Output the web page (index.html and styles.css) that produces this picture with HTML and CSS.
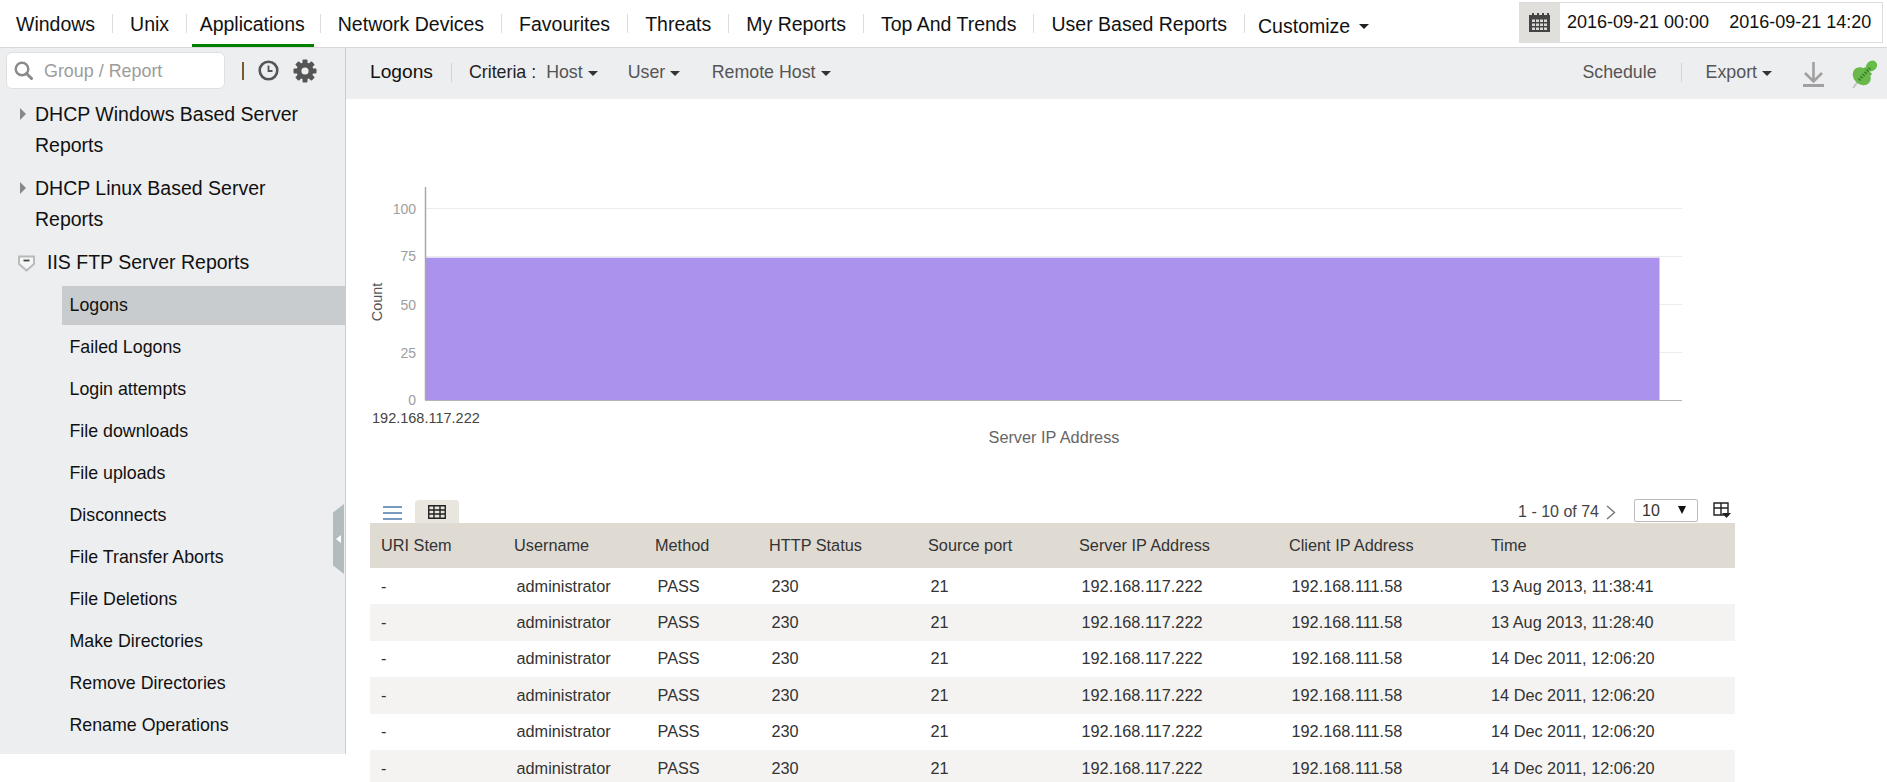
FILE: index.html
```html
<!DOCTYPE html>
<html lang="en">
<head>
<meta charset="utf-8">
<title>IIS FTP Server Reports - Logons</title>
<link rel="stylesheet" href="styles.css">
</head>
<body>
<header class="topbar">
  <nav class="nav">
    <a class="nav-item">Windows</a><i class="nav-sep"></i>
    <a class="nav-item">Unix</a><i class="nav-sep"></i>
    <a class="nav-item active">Applications</a><i class="nav-sep"></i>
    <a class="nav-item">Network Devices</a><i class="nav-sep"></i>
    <a class="nav-item">Favourites</a><i class="nav-sep"></i>
    <a class="nav-item">Threats</a><i class="nav-sep"></i>
    <a class="nav-item">My Reports</a><i class="nav-sep"></i>
    <a class="nav-item">Top And Trends</a><i class="nav-sep"></i>
    <a class="nav-item">User Based Reports</a><i class="nav-sep"></i>
    <a class="nav-item customize">Customize <b class="caret caret-nav"></b></a>
  </nav>
  <div class="daterange">
    <span class="date-icon">
      <svg width="21" height="19" viewBox="0 0 21 19"><path fill="#444" d="M0 2h3V0h2v2h3V0h2v2h3V0h2v2h3V0h2v2h1v17H0z"/><path fill="#d8d8d6" d="M3 6.500h3v2.500H3zM7 6.500h3v2.500H7zM11 6.500h3v2.500h-3zM15 6.500h3v2.500h-3zM3 10.500h3V13H3zM7 10.500h3V13H7zM11 10.500h3V13h-3zM15 10.500h3V13h-3zM3 14.500h3V17H3zM7 14.500h3V17H7zM11 14.500h3V17h-3zM15 14.500h3V17h-3z"/></svg>
    </span>
    <span class="date-text">2016-09-21 00:00</span>
    <span class="date-text">2016-09-21 14:20</span>
  </div>
</header>
<div class="layout">
  <aside class="sidebar">
    <div class="side-tools">
      <div class="search">
        <svg width="19" height="19" viewBox="0 0 19 19"><circle cx="8" cy="8" r="6.300" fill="none" stroke="#8a8a8a" stroke-width="2.400"/><path d="M12.500 12.500l5 5" stroke="#8a8a8a" stroke-width="3" stroke-linecap="round"/></svg>
        <span class="search-ph">Group / Report</span>
      </div>
      <i class="tool-sep"></i>
      <svg class="clock" width="21" height="21" viewBox="0 0 21 21"><circle cx="10.500" cy="10.500" r="8.800" fill="none" stroke="#555" stroke-width="2.600"/><path d="M10.500 5.500v5.500h4" fill="none" stroke="#555" stroke-width="1.800"/></svg>
      <svg class="gear" width="24" height="24" viewBox="0 0 24 24"><g fill="#555"><rect x="9.500" y="0.500" width="5" height="23" rx="1"/><rect x="9.500" y="0.500" width="5" height="23" rx="1" transform="rotate(45 12 12)"/><rect x="9.500" y="0.500" width="5" height="23" rx="1" transform="rotate(90 12 12)"/><rect x="9.500" y="0.500" width="5" height="23" rx="1" transform="rotate(135 12 12)"/><circle cx="12" cy="12" r="8.500"/></g><circle cx="12" cy="12" r="3.600" fill="#edeef0"/></svg>
    </div>
    <ul class="tree">
      <li class="group"><span class="arrow"></span>DHCP Windows Based Server Reports</li>
      <li class="group"><span class="arrow"></span>DHCP Linux Based Server Reports</li>
      <li class="group open">
        <svg class="shield" width="17" height="17" viewBox="0 0 17 17"><path d="M1 1.500h15v7.500l-7.500 6.500L1 9z" fill="#f6f6f6" stroke="#b5baba" stroke-width="1.900"/><path d="M5.500 5.500h6" stroke="#444" stroke-width="1.800"/></svg>IIS FTP Server Reports</li>
    </ul>
    <ul class="leaves">
      <li class="leaf selected">Logons</li>
      <li class="leaf">Failed Logons</li>
      <li class="leaf">Login attempts</li>
      <li class="leaf">File downloads</li>
      <li class="leaf">File uploads</li>
      <li class="leaf">Disconnects</li>
      <li class="leaf">File Transfer Aborts</li>
      <li class="leaf">File Deletions</li>
      <li class="leaf">Make Directories</li>
      <li class="leaf">Remove Directories</li>
      <li class="leaf">Rename Operations</li>
    </ul>
    <div class="collapse-handle"><span class="handle-arrow"></span></div>
  </aside>
  <main class="main">
    <div class="subbar">
      <span class="sub-title">Logons</span><i class="sub-sep"></i>
      <span class="crit-label">Criteria :</span>
      <span class="crit crit-host">Host<b class="caret"></b></span>
      <span class="crit crit-user">User<b class="caret"></b></span>
      <span class="crit crit-remote">Remote Host<b class="caret"></b></span>
      <span class="sub-right">
        <span class="action">Schedule</span><i class="sub-sep sep-right"></i>
        <span class="action">Export<b class="caret"></b></span>
        <svg class="download" width="21" height="25" viewBox="0 0 21 25"><path d="M10.500 0v19M2 11l8.500 8.500L19 11" fill="none" stroke="#a0a0a0" stroke-width="2.600"/><path d="M0 23.500h21" stroke="#a0a0a0" stroke-width="3"/></svg>
        <svg class="pin" width="26" height="30" viewBox="0 0 26 30"><path d="M1 29l6-8" stroke="#c4c4c4" stroke-width="2"/><ellipse cx="19.500" cy="7" rx="6" ry="5" fill="#68bd4a" transform="rotate(-40 19.500 7)"/><path d="M13 8l7 7-5 5-6-7z" fill="#58ad3c"/><ellipse cx="9.700" cy="17.300" rx="10" ry="8" fill="#68b84c" transform="rotate(45 9.700 17.300)"/><path d="M7 21l11-12" stroke="#3a7a2a" stroke-width="3" stroke-dasharray="1.500 1.500"/></svg>
      </span>
    </div>
    <section class="chart">
      <svg class="chart-svg" width="1541" height="392" viewBox="0 0 1541 392">
        <g class="grid">
          <path d="M79 109.500H1336M79 157.500H1336M79 205.500H1336M79 253.500H1336"/>
        </g>
        <rect class="bar" x="79" y="159" width="1234.500" height="142"/>
        <path class="bar-cap" d="M79 158.500H1313.500"/>
        <path class="axis-y" d="M79.500 88V301"/>
        <path class="axis-x" d="M79 301.500H1336"/>
        <g class="ticks">
          <text x="70" y="115">100</text>
          <text x="70" y="162">75</text>
          <text x="70" y="211">50</text>
          <text x="70" y="259">25</text>
          <text x="70" y="306">0</text>
        </g>
        <text class="axis-name" transform="translate(36 203) rotate(-90)" text-anchor="middle">Count</text>
        <text class="cat-label" x="26" y="324">192.168.117.222</text>
        <text class="x-title" x="708" y="344" text-anchor="middle">Server IP Address</text>
      </svg>
    </section>
    <div class="table-tools">
      <span class="view-list">
        <svg width="19" height="14" viewBox="0 0 19 14"><path d="M0 1h19M0 7h19M0 13h19" stroke="#4a7bab" stroke-width="1.500"/></svg>
      </span>
      <span class="view-grid">
        <svg width="18" height="14" viewBox="0 0 18 14"><path d="M.75.75h16.500v12.500H.75zM.75 5h16.500M.75 9h16.500M6 .75v12.500M12 .75v12.500" fill="none" stroke="#222" stroke-width="1.400"/></svg>
      </span>
      <span class="pager">1 - 10 of 74</span>
      <svg class="chev" width="10" height="15" viewBox="0 0 10 15"><path d="M1 1l7.500 6.500L1 14" fill="none" stroke="#777" stroke-width="1.400"/></svg>
      <span class="page-size">10<b class="size-arrow"></b></span>
      <svg class="columns" width="18" height="16" viewBox="0 0 18 16"><path d="M1 1h14v12H1zM1 6h14M8 1v12" fill="#fff" stroke="#222" stroke-width="1.400"/><path d="M9 11h9l-4.500 5z" fill="#222"/></svg>
    </div>
    <table class="data">
      <colgroup>
        <col class="c1"><col class="c2"><col class="c3"><col class="c4"><col class="c5"><col class="c6"><col class="c7"><col class="c8">
      </colgroup>
      <thead>
        <tr><th>URI Stem</th><th>Username</th><th>Method</th><th>HTTP Status</th><th>Source port</th><th>Server IP Address</th><th>Client IP Address</th><th>Time</th></tr>
      </thead>
      <tbody>
        <tr><td class="first">-</td><td>administrator</td><td>PASS</td><td>230</td><td>21</td><td>192.168.117.222</td><td>192.168.111.58</td><td class="last">13 Aug 2013, 11:38:41</td></tr>
        <tr><td class="first">-</td><td>administrator</td><td>PASS</td><td>230</td><td>21</td><td>192.168.117.222</td><td>192.168.111.58</td><td class="last">13 Aug 2013, 11:28:40</td></tr>
        <tr><td class="first">-</td><td>administrator</td><td>PASS</td><td>230</td><td>21</td><td>192.168.117.222</td><td>192.168.111.58</td><td class="last">14 Dec 2011, 12:06:20</td></tr>
        <tr><td class="first">-</td><td>administrator</td><td>PASS</td><td>230</td><td>21</td><td>192.168.117.222</td><td>192.168.111.58</td><td class="last">14 Dec 2011, 12:06:20</td></tr>
        <tr><td class="first">-</td><td>administrator</td><td>PASS</td><td>230</td><td>21</td><td>192.168.117.222</td><td>192.168.111.58</td><td class="last">14 Dec 2011, 12:06:20</td></tr>
        <tr><td class="first">-</td><td>administrator</td><td>PASS</td><td>230</td><td>21</td><td>192.168.117.222</td><td>192.168.111.58</td><td class="last">14 Dec 2011, 12:06:20</td></tr>
      </tbody>
    </table>
  </main>
</div>
</body>
</html>
```

FILE: styles.css
```css
* { box-sizing: border-box; }
html, body { margin: 0; padding: 0; height: 782px; overflow: hidden; background: #fff; }
body { font-family: "Liberation Sans", Arial, sans-serif; color: #111; }
ul { list-style: none; margin: 0; padding: 0; }
i, b { display: inline-block; font-style: normal; }

.topbar { display: flex; justify-content: space-between; height: 48px; border-bottom: 1px solid #d8d8d8; }
.nav { display: flex; align-items: center; height: 47px; padding-left: 7px; gap: 8px; }
.nav-item { display: flex; align-items: center; height: 47px; padding: 2px 9px 0; font-size: 19.5px; color: #111; white-space: pre; }
.nav-item.active { margin: 0 -2px 0 -3px; padding: 5px 9px 0 7.5px; border-bottom: 3px solid #008000; }
.nav-item.customize { margin-left: -4px; padding-top: 5px; }
.nav-sep { width: 1px; height: 19px; background: #dcdcdc; }
.caret { width: 0; height: 0; margin-left: 5px; border-style: solid; border-width: 5.5px 5.5px 0; border-color: #333 transparent transparent; vertical-align: 2px; }
.caret-nav { margin-left: 3px; border-color: #222 transparent transparent; }

.daterange { display: flex; align-items: center; flex: none; width: 364px; height: 41px; margin: 2px 4px 0 0; border: 1px solid #ddd; border-left: 0; font-size: 18px; color: #111; }
.date-icon { display: flex; align-items: center; justify-content: center; flex: none; width: 41px; height: 39px; margin-right: 7px; background: #e0dfdc; }
.date-text { flex: none; margin-right: 20px; white-space: nowrap; }
.date-text:last-child { margin-right: 0; }

.layout { display: flex; height: 734px; }
.sidebar { position: relative; flex: none; width: 346px; height: 706px; background: #edeef0; border-right: 1px solid #ccc; }
.side-tools { display: flex; align-items: center; height: 51px; padding: 0 0 6px 6px; }
.search { display: flex; align-items: center; width: 219px; height: 37px; padding-left: 7px; background: #fff; border: 1px solid #dfe0e2; border-radius: 6px; }
.search-ph { margin-left: 11px; padding-top: 1px; font-size: 17.9px; color: #9c9c9c; }
.tool-sep { width: 2px; height: 18px; margin-left: 17px; background: #7a5a30; }
.clock { margin-left: 14px; }
.gear { margin-left: 14px; }

.group { position: relative; padding: 0 30px 12px 35px; font-size: 19.5px; line-height: 31px; color: #111; }
.arrow { position: absolute; left: 20px; top: 9px; width: 0; height: 0; border-style: solid; border-width: 6px 0 6px 6px; border-color: transparent transparent transparent #888; }
.group.open { padding: 0 0 7.5px 47px; }
.shield { position: absolute; left: 18px; top: 8px; }
.leaves { padding-left: 62px; }
.leaf { height: 39px; margin-bottom: 3px; padding-left: 7.5px; font-size: 17.8px; line-height: 39px; color: #111; }
.leaf.selected { background: #c9ccce; }
.collapse-handle { position: absolute; right: 1px; top: 456px; display: flex; align-items: center; justify-content: center; width: 11px; height: 70px; background: #b2bcbe; clip-path: polygon(100% 0, 100% 100%, 0 88%, 0 12%); }
.handle-arrow { width: 0; height: 0; border-style: solid; border-width: 4px 5px 4px 0; border-color: transparent #fff transparent transparent; }

.main { flex: 1; min-width: 0; height: 734px; overflow: hidden; }
.subbar { display: flex; align-items: center; height: 51px; padding: 0 0 3px 24px; background: #edeef0; font-size: 17.8px; }
.sub-title { font-size: 19.2px; color: #111; }
.sub-sep { width: 1px; height: 19px; margin: 0 17px 0 18px; background: #d4d4d4; }
.crit-label { color: #222; }
.crit { color: #555; white-space: nowrap; }
.crit-host { margin-left: 10px; }
.crit-user { margin-left: 30px; }
.crit-remote { margin-left: 31.5px; }
.sub-right { display: flex; align-items: center; margin-left: auto; color: #555; }
.action { white-space: nowrap; }
.sep-right { margin: 0 24px; }
.download { margin: 4px 0 0 31px; }
.pin { margin: 3px 9px 0 28px; }

.chart { height: 392px; }
.chart-svg { display: block; font-family: "Liberation Sans", Arial, sans-serif; }
.grid path { fill: none; stroke: #ececec; stroke-width: 1; }
.bar { fill: #ab92ec; }
.bar-cap { fill: none; stroke: #e2dcf6; stroke-width: 1; }
.axis-y { fill: none; stroke: #a8a8a8; stroke-width: 1.5; }
.axis-x { fill: none; stroke: #b4b4b4; stroke-width: 1; }
.ticks text { fill: #9e9e9e; font-size: 14px; text-anchor: end; }
.axis-name { fill: #555; font-size: 14.5px; }
.cat-label { fill: #444; font-size: 14.5px; }
.x-title { fill: #666; font-size: 16.3px; }

.table-tools { display: flex; align-items: flex-end; width: 1365px; height: 32px; margin-left: 24px; font-size: 16px; }
.view-list { display: flex; margin: 0 0 3.5px 13px; }
.view-grid { display: flex; align-items: center; justify-content: center; width: 44px; height: 23px; margin-left: 13px; padding-top: 1px; background: #e9e6df; border-radius: 4px 4px 0 0; }
.pager { margin: 0 0 2px auto; color: #444; white-space: nowrap; }
.chev { margin: 0 0 3.5px 7px; }
.page-size { position: relative; display: block; width: 64px; height: 23px; margin: 0 0 1px 18px; padding-left: 7px; line-height: 21px; color: #333; background: #fff; border: 1px solid #bbb; border-radius: 2px; }
.size-arrow { position: absolute; right: 11px; top: 6px; width: 0; height: 0; border-style: solid; border-width: 8px 4px 0; border-color: #111 transparent transparent; }
.columns { margin: 0 4px 5px 15px; }

.data { width: 1365px; margin-left: 24px; border-collapse: collapse; table-layout: fixed; font-size: 16.3px; }
.c1 { width: 133px; } .c2 { width: 141px; } .c3 { width: 114px; } .c4 { width: 159px; }
.c5 { width: 151px; } .c6 { width: 210px; } .c7 { width: 202px; } .c8 { width: 255px; }
th { height: 45px; padding: 0 0 0 11px; text-align: left; font-weight: 400; color: #333; background: #dfdbd3; white-space: nowrap; }
td { height: 36.4px; padding: 0 0 0 13.5px; color: #333; white-space: nowrap; }
td.first, td.last { padding-left: 11px; }
tbody tr:nth-child(even) td { background: #f4f3f1; }
```
